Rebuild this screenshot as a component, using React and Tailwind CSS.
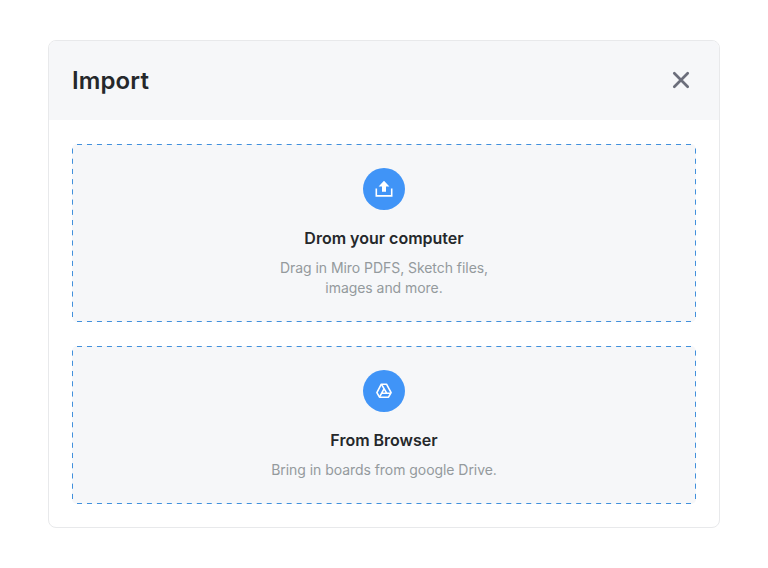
const ZONE_WIDTH = 624;

// Dashed outline: every side starts and ends on a full 5px dash, corners stay open.
const DashedOutline = ({ height }) => {
  const right = ZONE_WIDTH - 0.5;
  const bottom = height - 0.5;
  const endX = ZONE_WIDTH - 5;
  const endY = height - 5;
  const fit = (length) => Math.round((length - 5) / 10) * 10 + 5;
  const across = fit(endX - 5);
  const down = fit(endY - 5);
  return (
    <svg
      className="pointer-events-none absolute inset-0"
      width={ZONE_WIDTH}
      height={height}
      fill="none"
      stroke="#4190dc"
      strokeDasharray="5 5"
      aria-hidden="true"
    >
      <line x1="5" y1="0.5" x2={endX} y2="0.5" pathLength={across} />
      <line x1="5" y1={bottom} x2={endX} y2={bottom} pathLength={across} />
      <line x1="0.5" y1="4.5" x2="0.5" y2={endY} pathLength={down} />
      <line x1={right} y1="4.5" x2={right} y2={endY} pathLength={down} />
    </svg>
  );
};

const DropZone = ({ title, icon, height, heightClass, children }) => (
  <section className={`relative flex flex-col items-center rounded-[5px] bg-[#f6f7f9] pt-6 text-center ${heightClass}`}>
    <DashedOutline height={height} />
    <div className="flex size-[42px] items-center justify-center rounded-full bg-[#4094f7]">{icon}</div>
    <h2 className="mt-[18px] text-base leading-5 font-semibold text-[#25282b]">{title}</h2>
    <p className="mt-[10px] text-sm leading-5 tracking-[-0.05px] text-[#949a9d]">{children}</p>
  </section>
);

const UploadIcon = () => (
  <svg width="18" height="18" viewBox="0 0 18 18" fill="none">
    <path d="M9 0.8 14.4 6.6H11V11.8H7V6.6H3.6Z" fill="white" />
    <path d="M1.3 8.5V15.9H16.7V8.5" stroke="white" strokeWidth="1.6" />
  </svg>
);

const DriveIcon = () => (
  <svg width="18" height="18" viewBox="0 0 18 18" fill="none" stroke="white" strokeWidth="1.6" strokeLinejoin="round">
    <path d="M6.3 2.2H11.5L16.1 10.6 13.5 15.2H4.5L1.9 10.6Z" />
    <path d="M6.5 2.4 11.7 11.2M9 6.8 4.6 14.9M15.8 11.2H7.2" />
  </svg>
);

export default function App() {
  return (
    <main className="h-[568px] w-[768px] bg-white px-12 pt-10 font-['Inter',sans-serif]">
      <div className="h-[488px] w-[672px] overflow-hidden rounded-lg border border-[#e8e9eb] bg-white">
        <header className="flex h-[79px] items-center justify-between bg-[#f6f7f9] pr-[29px] pl-[23px]">
          <h1 className="text-2xl leading-8 font-semibold tracking-[0.12px] text-[#25282b]">Import</h1>
          <button aria-label="Close" className="mb-[2px] flex">
            <svg width="18" height="18" viewBox="0 0 18 18" fill="none" stroke="#6b6e7b" strokeWidth="2.7" strokeLinecap="round">
              <path d="M2.3 2.3 15.7 15.7M15.7 2.3 2.3 15.7" />
            </svg>
          </button>
        </header>
        <div className="flex flex-col gap-6 px-[23px] pt-6">
          <DropZone title="Drom your computer" height={178} heightClass="h-[178px]" icon={<UploadIcon />}>
            Drag in Miro PDFS, Sketch files,
            <br />
            images and more.
          </DropZone>
          <DropZone title="From Browser" height={158} heightClass="h-[158px]" icon={<DriveIcon />}>
            Bring in boards from google Drive.
          </DropZone>
        </div>
      </div>
    </main>
  );
}
